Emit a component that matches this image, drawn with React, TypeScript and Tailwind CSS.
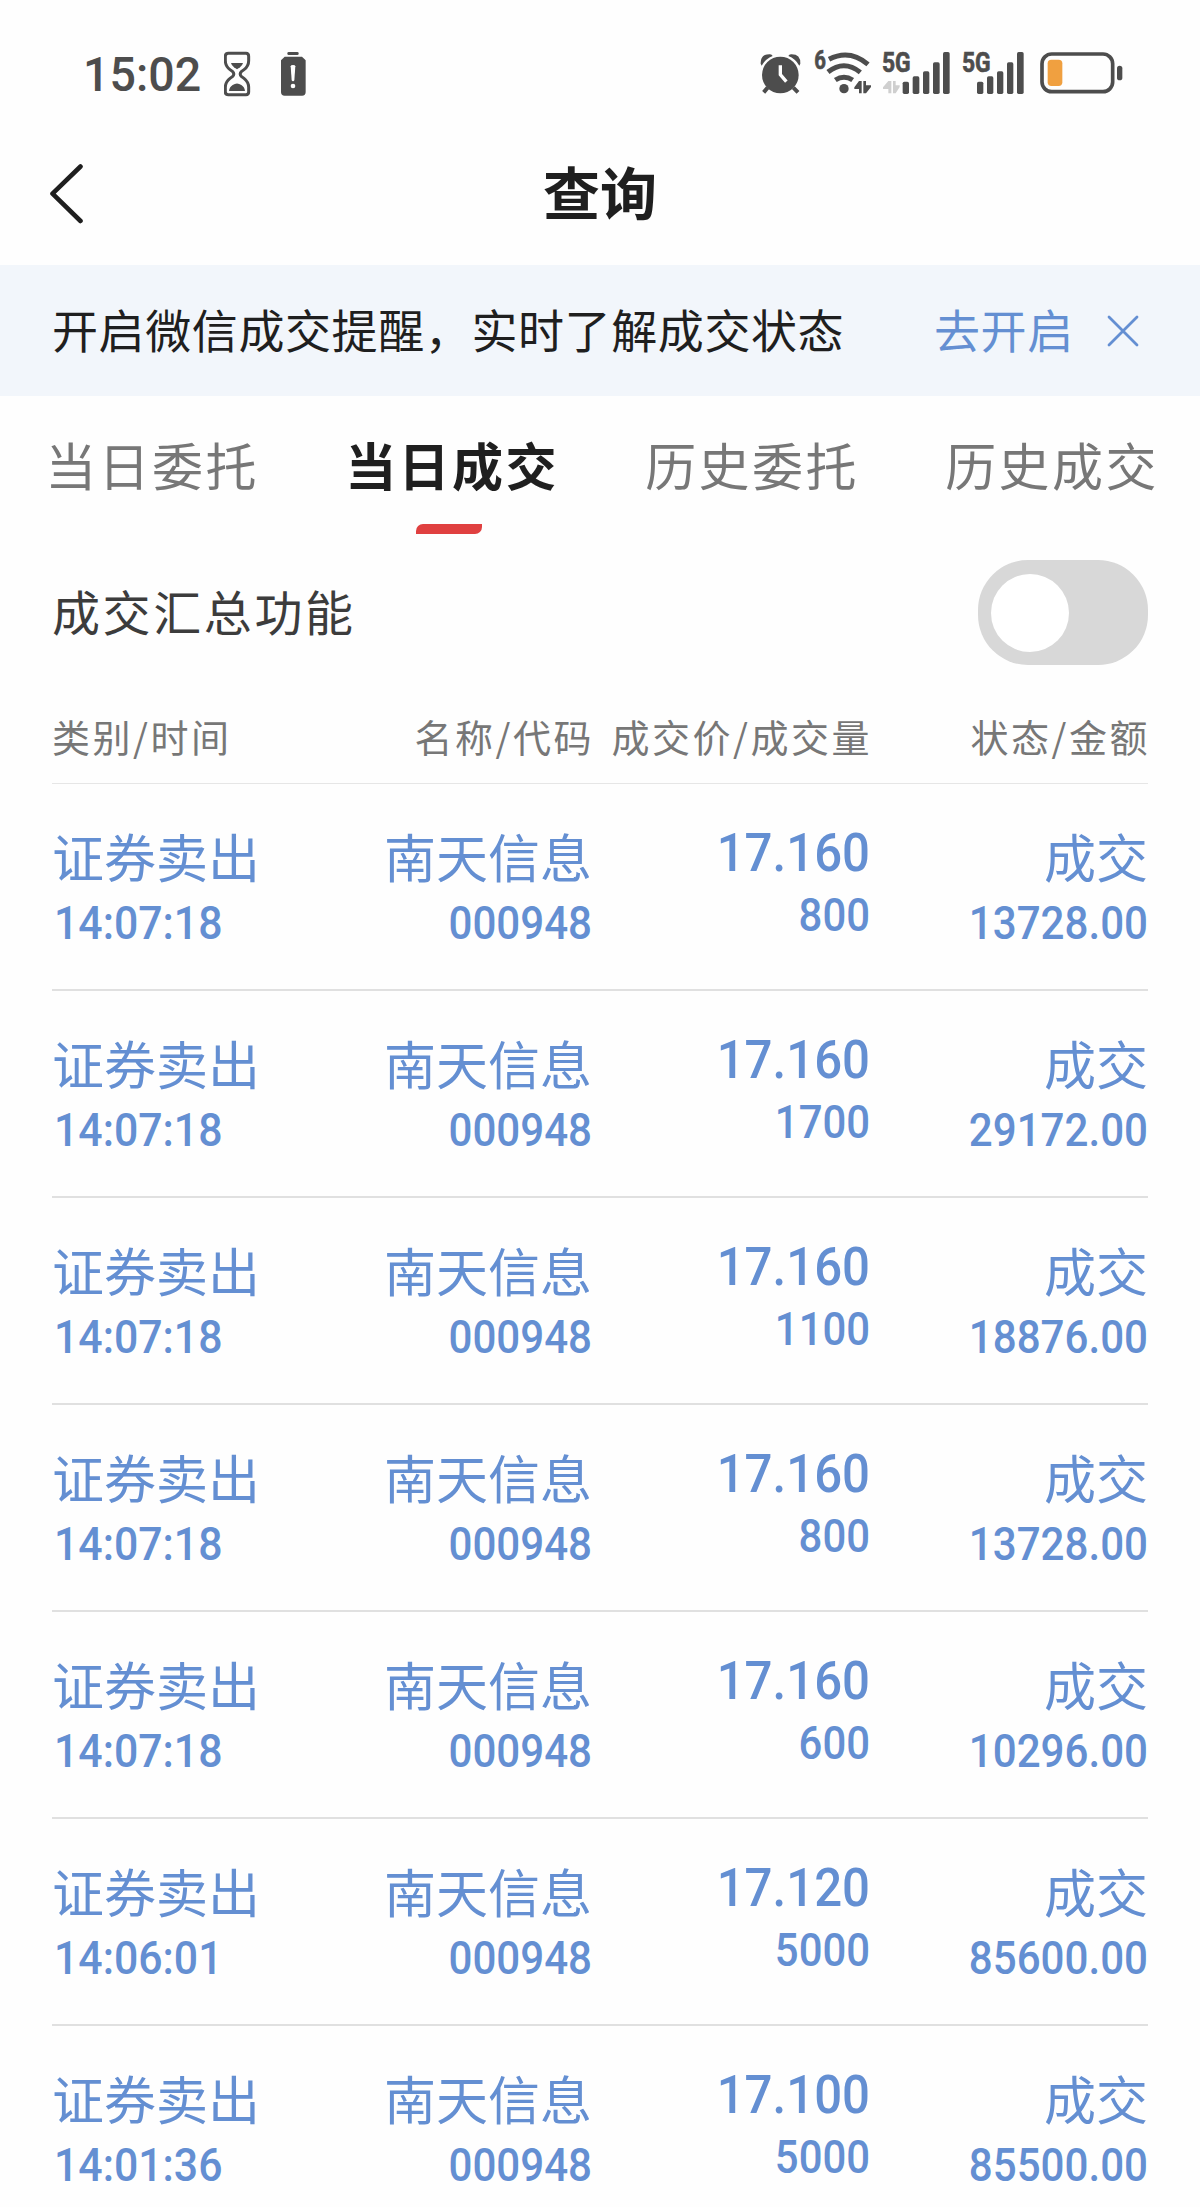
import { useState } from "react";

const tabs = ["当日委托", "当日成交", "历史委托", "历史成交"];

const deals = [
  { time: "14:07:18", price: "17.160", qty: "800", amount: "13728.00" },
  { time: "14:07:18", price: "17.160", qty: "1700", amount: "29172.00" },
  { time: "14:07:18", price: "17.160", qty: "1100", amount: "18876.00" },
  { time: "14:07:18", price: "17.160", qty: "800", amount: "13728.00" },
  { time: "14:07:18", price: "17.160", qty: "600", amount: "10296.00" },
  { time: "14:06:01", price: "17.120", qty: "5000", amount: "85600.00" },
  { time: "14:01:36", price: "17.100", qty: "5000", amount: "85500.00" },
];

const num = "font-['Roboto','Liberation_Sans',sans-serif] font-medium";

function StatusBar() {
  return (
    <div className="flex h-[120px] items-start pl-[83px] pt-[30px] text-[#4d4d4d]">
      <span className={`${num} mt-[20px] w-[141px] text-[49px] leading-none`}>
        <span className="inline-block origin-left scale-x-[0.95]">15:02</span>
      </span>

      {/* hourglass + battery warning */}
      <svg width="100" height="90" viewBox="492 0 300 270" fill="none">
        <path
          d="M505 70H558Q566 70 566 79V92Q566 108 552 119L544 125Q537 132 544 139L552 145Q566 156 566 172V186Q566 194 558 194H505Q496 194 496 186V172Q496 156 510 145L518 139Q525 132 518 125L510 119Q496 108 496 92V79Q496 70 505 70Z"
          stroke="currentColor"
          strokeWidth="9"
        />
        <path d="M513 99H549Q547 107 540 112L531 118L522 112Q515 107 513 99Z" fill="currentColor" />
        <path d="M507 183Q508 171 518 165Q531 156 544 165Q554 171 555 183Z" fill="currentColor" />
        <rect x="682" y="66" width="34" height="9" rx="4" fill="currentColor" />
        <path
          d="M674 80H726L737 91V186Q737 197 726 197H674Q663 197 663 186V91Z"
          fill="currentColor"
        />
        <path d="M692 109Q692 105 699 105Q706 105 706 109L703 151Q702 154 699 154Q696 154 695 151Z" fill="#fff" />
        <circle cx="699" cy="168" r="7" fill="#fff" />
      </svg>

      <svg
        className="ml-[436px] shrink-0"
        width="370"
        height="90"
        viewBox="60 0 1110 270"
        fill="none"
        stroke="currentColor"
      >
        {/* alarm */}
        <g stroke="none" fill="currentColor">
          <circle cx="121" cy="135" r="55" />
          <path d="M62 101Q61 72 90 73Q96 74 98 78Q77 86 65 107Z" />
          <path d="M181 101Q182 72 153 73Q147 74 145 78Q166 86 178 107Z" />
        </g>
        <path d="M83 173L71 187M160 173L174 187" strokeWidth="12" />
        <path d="M121 106V134L139 155" stroke="#fff" strokeWidth="10" />

        {/* wifi */}
        <g strokeWidth="15">
          <path d="M267 88Q328 56 384 103" />
          <path d="M264 126Q312 88 361 127" />
          <path d="M286 150Q312 133 338 150" />
        </g>
        <circle cx="312" cy="176" r="14" fill="currentColor" stroke="none" />
        <g fill="currentColor" stroke="none">
          <path d="M357 153H365V190H357V177H343V172Z" />
          <path d="M370 153H378V166H393V171L378 190H370Z" />
        </g>
        <text
          x="223"
          y="116"
          fill="currentColor"
          strokeWidth="2"
          textLength="35"
          lengthAdjust="spacingAndGlyphs"
          className="font-['Roboto',sans-serif] text-[75px] font-bold"
        >
          6
        </text>

        {/* signals */}
        <g
          fill="currentColor"
          strokeWidth="2"
          className="font-['Roboto',sans-serif] text-[82px] font-bold"
        >
          <text x="426" y="127" textLength="86" lengthAdjust="spacingAndGlyphs">5G</text>
          <text x="666" y="127" textLength="86" lengthAdjust="spacingAndGlyphs">5G</text>
        </g>
        <g fill="#cfcfcf" stroke="none">
          <path d="M445 153H454V190H445V177H429V172Z" />
          <path d="M459 153H467V166H479V171L467 190H459Z" />
        </g>
        <g fill="currentColor" stroke="none">
          <rect x="488" y="155" width="19" height="37" rx="5" />
          <rect x="518" y="139" width="20" height="53" rx="5" />
          <rect x="549" y="124" width="19" height="68" rx="5" />
          <rect x="579" y="97" width="20" height="95" rx="5" />
          <rect x="609" y="66" width="20" height="126" rx="5" />
          <rect x="711" y="155" width="19" height="37" rx="5" />
          <rect x="741" y="139" width="19" height="53" rx="5" />
          <rect x="771" y="124" width="19" height="68" rx="5" />
          <rect x="801" y="97" width="19" height="95" rx="5" />
          <rect x="831" y="66" width="20" height="126" rx="5" />
        </g>

        {/* battery */}
        <rect x="906" y="72" width="212" height="113" rx="29" strokeWidth="11" />
        <rect x="923" y="89" width="44" height="79" rx="11" fill="#f0a040" stroke="none" />
        <rect x="1131" y="107" width="16" height="44" rx="8" fill="currentColor" stroke="none" />
      </svg>
    </div>
  );
}

export default function App() {
  const [active, setActive] = useState(1);
  const [summary, setSummary] = useState(false);

  return (
    <div className="h-[2207px] w-[1200px] overflow-hidden bg-[#fefefe] font-['Noto_Sans_CJK_SC',sans-serif] leading-none text-[#1f1f1f]">
      <StatusBar />

      <header className="grid h-[145px] grid-cols-[1fr_auto_1fr] items-start">
        <svg className="ml-[46px] mt-[42px]" width="42" height="62" viewBox="0 0 42 62" fill="none">
          <path d="M34.5 4.5L6.5 31.7L34.5 59" stroke="#1f1f1f" strokeWidth="4.6" strokeLinecap="round" strokeLinejoin="round" />
        </svg>
        <h1 className="mt-[42px] text-[57px] font-bold leading-none">查询</h1>
      </header>

      <div className="flex h-[131px] items-center bg-[#f2f6fb] pb-[6px] pl-[52px] text-[46px] tracking-[0.6px]">
        <span className="w-[882px]">开启微信成交提醒，实时了解成交状态</span>
        <button className="text-[#648fd2]">去开启</button>
        <svg className="ml-[30px] mt-[6px]" width="38" height="38" viewBox="0 0 38 38" fill="none">
          <path d="M5 5L33 33M33 5L5 33" stroke="#648fd2" strokeWidth="2.8" strokeLinecap="round" />
        </svg>
      </div>

      <nav className="flex pt-[42px]">
        {tabs.map((tab, i) => (
          <button
            key={tab}
            onClick={() => setActive(i)}
            className="flex w-[300px] flex-col items-center text-[51px] leading-[52px]"
          >
            <span className={`-mr-[4px] tracking-[2.4px] ${i === active ? "font-bold" : "text-[#777777]"}`}>
              {tab}
            </span>
            {i === active && (
              <span className="mr-[2px] mt-[34px] h-[10px] w-[66px] rounded-tl-[7px] rounded-br-[7px] bg-[#e04040]" />
            )}
          </button>
        ))}
      </nav>

      <main className="px-[52px]">
        <div className="mt-[26px] flex h-[105px] items-center justify-between">
          <span className="-mt-[5px] text-[48px] tracking-[2.6px] text-[#3c3c3c]">成交汇总功能</span>
          <button
            onClick={() => setSummary(!summary)}
            className={`flex h-[105px] w-[170px] items-center rounded-[50px] px-[13px] ${
              summary ? "justify-end bg-[#648fd2]" : "bg-[#d8d8d8]"
            }`}
          >
            <span className="h-[78px] w-[78px] rounded-full bg-white" />
          </button>
        </div>

        <div className="mt-[52px] grid h-[67px] grid-cols-[242px_300px_278px_278px] border-b border-[#e6e6e6] text-right text-[38px] tracking-[2.5px] text-[#777777]">
          <span className="text-left">类别/时间</span>
          <span>名称/代码</span>
          <span className="whitespace-nowrap">成交价/成交量</span>
          <span>状态/金额</span>
        </div>

        {deals.map((deal, i) => (
          <div
            key={i}
            className="grid h-[207px] grid-cols-[240px_300px_278px_278px] border-b-2 border-[#e0e0e0] pt-[46px] text-right text-[52px] text-[#648fd2]"
          >
            <div className="text-left">
              <div>证券卖出</div>
              <div className={`${num} ml-[2px] mt-[18px] origin-left scale-x-[0.93] text-[46px]`}>{deal.time}</div>
            </div>
            <div>
              <div>南天信息</div>
              <div className={`${num} mt-[18px] origin-right scale-x-[0.915] text-[46px]`}>000948</div>
            </div>
            <div className={`${num} -mt-[4px] origin-right scale-x-[0.91]`}>
              <div className="text-[54px]">{deal.price}</div>
              <div className="mt-[12px] text-[46px]">{deal.qty}</div>
            </div>
            <div>
              <div>成交</div>
              <div className={`${num} mt-[18px] origin-right scale-x-[0.915] text-[46px]`}>{deal.amount}</div>
            </div>
          </div>
        ))}
      </main>
    </div>
  );
}
